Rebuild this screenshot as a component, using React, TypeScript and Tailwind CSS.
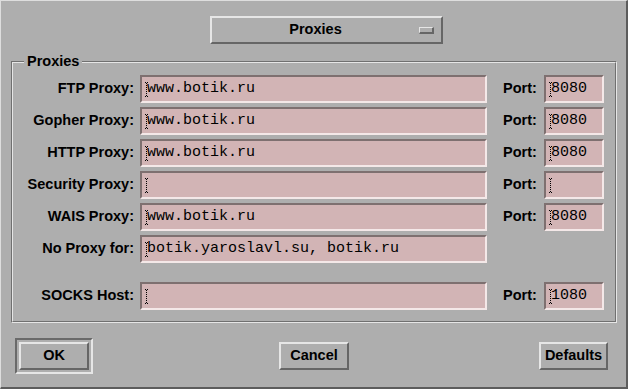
import React from "react";

function Cursor() {
  const dots: React.ReactElement[] = [];
  for (let y = 1; y < 14; y += 2) dots.push(<rect key={y} x={2} y={y} width={1} height={1} fill="#000" />);
  return (
    <svg className="absolute left-[2px] top-[5px]" width="5" height="15" viewBox="0 0 5 15">
      <rect x={1} y={0} width={1} height={1} fill="#000" />
      <rect x={3} y={0} width={1} height={1} fill="#000" />
      {dots}
      <rect x={1} y={14} width={1} height={1} fill="#000" />
      <rect x={3} y={14} width={1} height={1} fill="#000" />
    </svg>
  );
}

function Field({ value, w }: { value: string; w: string }) {
  return (
    <div
      className={`relative h-[28px] ${w} shrink-0 border-2 border-t-[#7e7070] border-l-[#7e7070] border-b-[#f4e8e8] border-r-[#f4e8e8] bg-[#d2b4b5] pl-[5px] font-['Liberation_Mono',monospace] font-normal text-[15px] leading-[24px] text-black whitespace-nowrap overflow-hidden`}
    >
      <Cursor />
      {value}
    </div>
  );
}

function Row({ label, value, port, className = "" }: { label: string; value: string; port?: string; className?: string }) {
  return (
    <div className={`flex items-center h-[28px] ${className}`}>
      <div className="w-[121px] text-right whitespace-nowrap">{label}</div>
      <div className="ml-[6px]">
        <Field value={value} w="w-[347px]" />
      </div>
      {port !== undefined && (
        <>
          <div className="ml-[16px] w-[41px] whitespace-nowrap">Port:</div>
          <Field value={port} w="w-[60px]" />
        </>
      )}
    </div>
  );
}

function Button({ label, w, className = "" }: { label: string; w: string; className?: string }) {
  return (
    <div
      className={`${w} h-[28px] flex items-center justify-center border-2 border-t-[#e6e6e6] border-l-[#e6e6e6] border-b-[#666666] border-r-[#666666] bg-[#aeaeae] ${className}`}
    >
      {label}
    </div>
  );
}

export default function App() {
  return (
    <div className="w-[628px] h-[389px] bg-[#aeaeae] border-t border-l border-t-[#dedede] border-l-[#dedede] border-r-2 border-b-2 border-r-[#5c5c5c] border-b-[#5c5c5c] flex flex-col font-['Liberation_Sans',Arial,sans-serif] font-bold text-[14.5px] text-black">
      {/* option menu */}
      <div className="mt-[15px] ml-[209px] w-[233px] h-[28px] flex items-center border-2 border-t-[#e6e6e6] border-l-[#e6e6e6] border-b-[#666666] border-r-[#666666]">
        <div className="flex-1 text-center">Proxies</div>
        <div className="w-[15px] h-[7px] border-t border-l border-t-[#e6e6e6] border-l-[#e6e6e6] border-b-2 border-r-2 border-b-[#666666] border-r-[#666666] mr-[7px]" />
      </div>

      {/* frame */}
      <div className="relative mt-[17px] ml-[10px] w-[606px] border border-t-[#707070] border-l-[#707070] border-b-[#e6e6e6] border-r-[#e6e6e6]">
        <div className="border border-t-[#e6e6e6] border-l-[#e6e6e6] border-b-[#707070] border-r-[#707070] pt-[12px] pb-[11px] flex flex-col gap-[4px]">
          <Row label="FTP Proxy:" value="www.botik.ru" port="8080" />
          <Row label="Gopher Proxy:" value="www.botik.ru" port="8080" />
          <Row label="HTTP Proxy:" value="www.botik.ru" port="8080" />
          <Row label="Security Proxy:" value="" port="" />
          <Row label="WAIS Proxy:" value="www.botik.ru" port="8080" />
          <Row label="No Proxy for:" value="botik.yaroslavl.su, botik.ru" />
          <Row label="SOCKS Host:" value="" port="1080" className="mt-[15px]" />
        </div>
        <div className="absolute left-[12px] top-[-9px] px-[3px] bg-[#aeaeae] leading-[16px]">Proxies</div>
      </div>

      {/* buttons */}
      <div className="mt-[15px] flex items-start">
        <div className="ml-[14px] w-[78px] h-[36px] p-[2px] border-2 border-t-[#6a6a6a] border-l-[#6a6a6a] border-b-[#e6e6e6] border-r-[#e6e6e6]">
          <Button label="OK" w="w-[70px]" />
        </div>
        <Button label="Cancel" w="w-[70px]" className="ml-[186px] mt-[4px]" />
        <Button label="Defaults" w="w-[69px]" className="ml-[190px] mt-[4px]" />
      </div>
    </div>
  );
}
